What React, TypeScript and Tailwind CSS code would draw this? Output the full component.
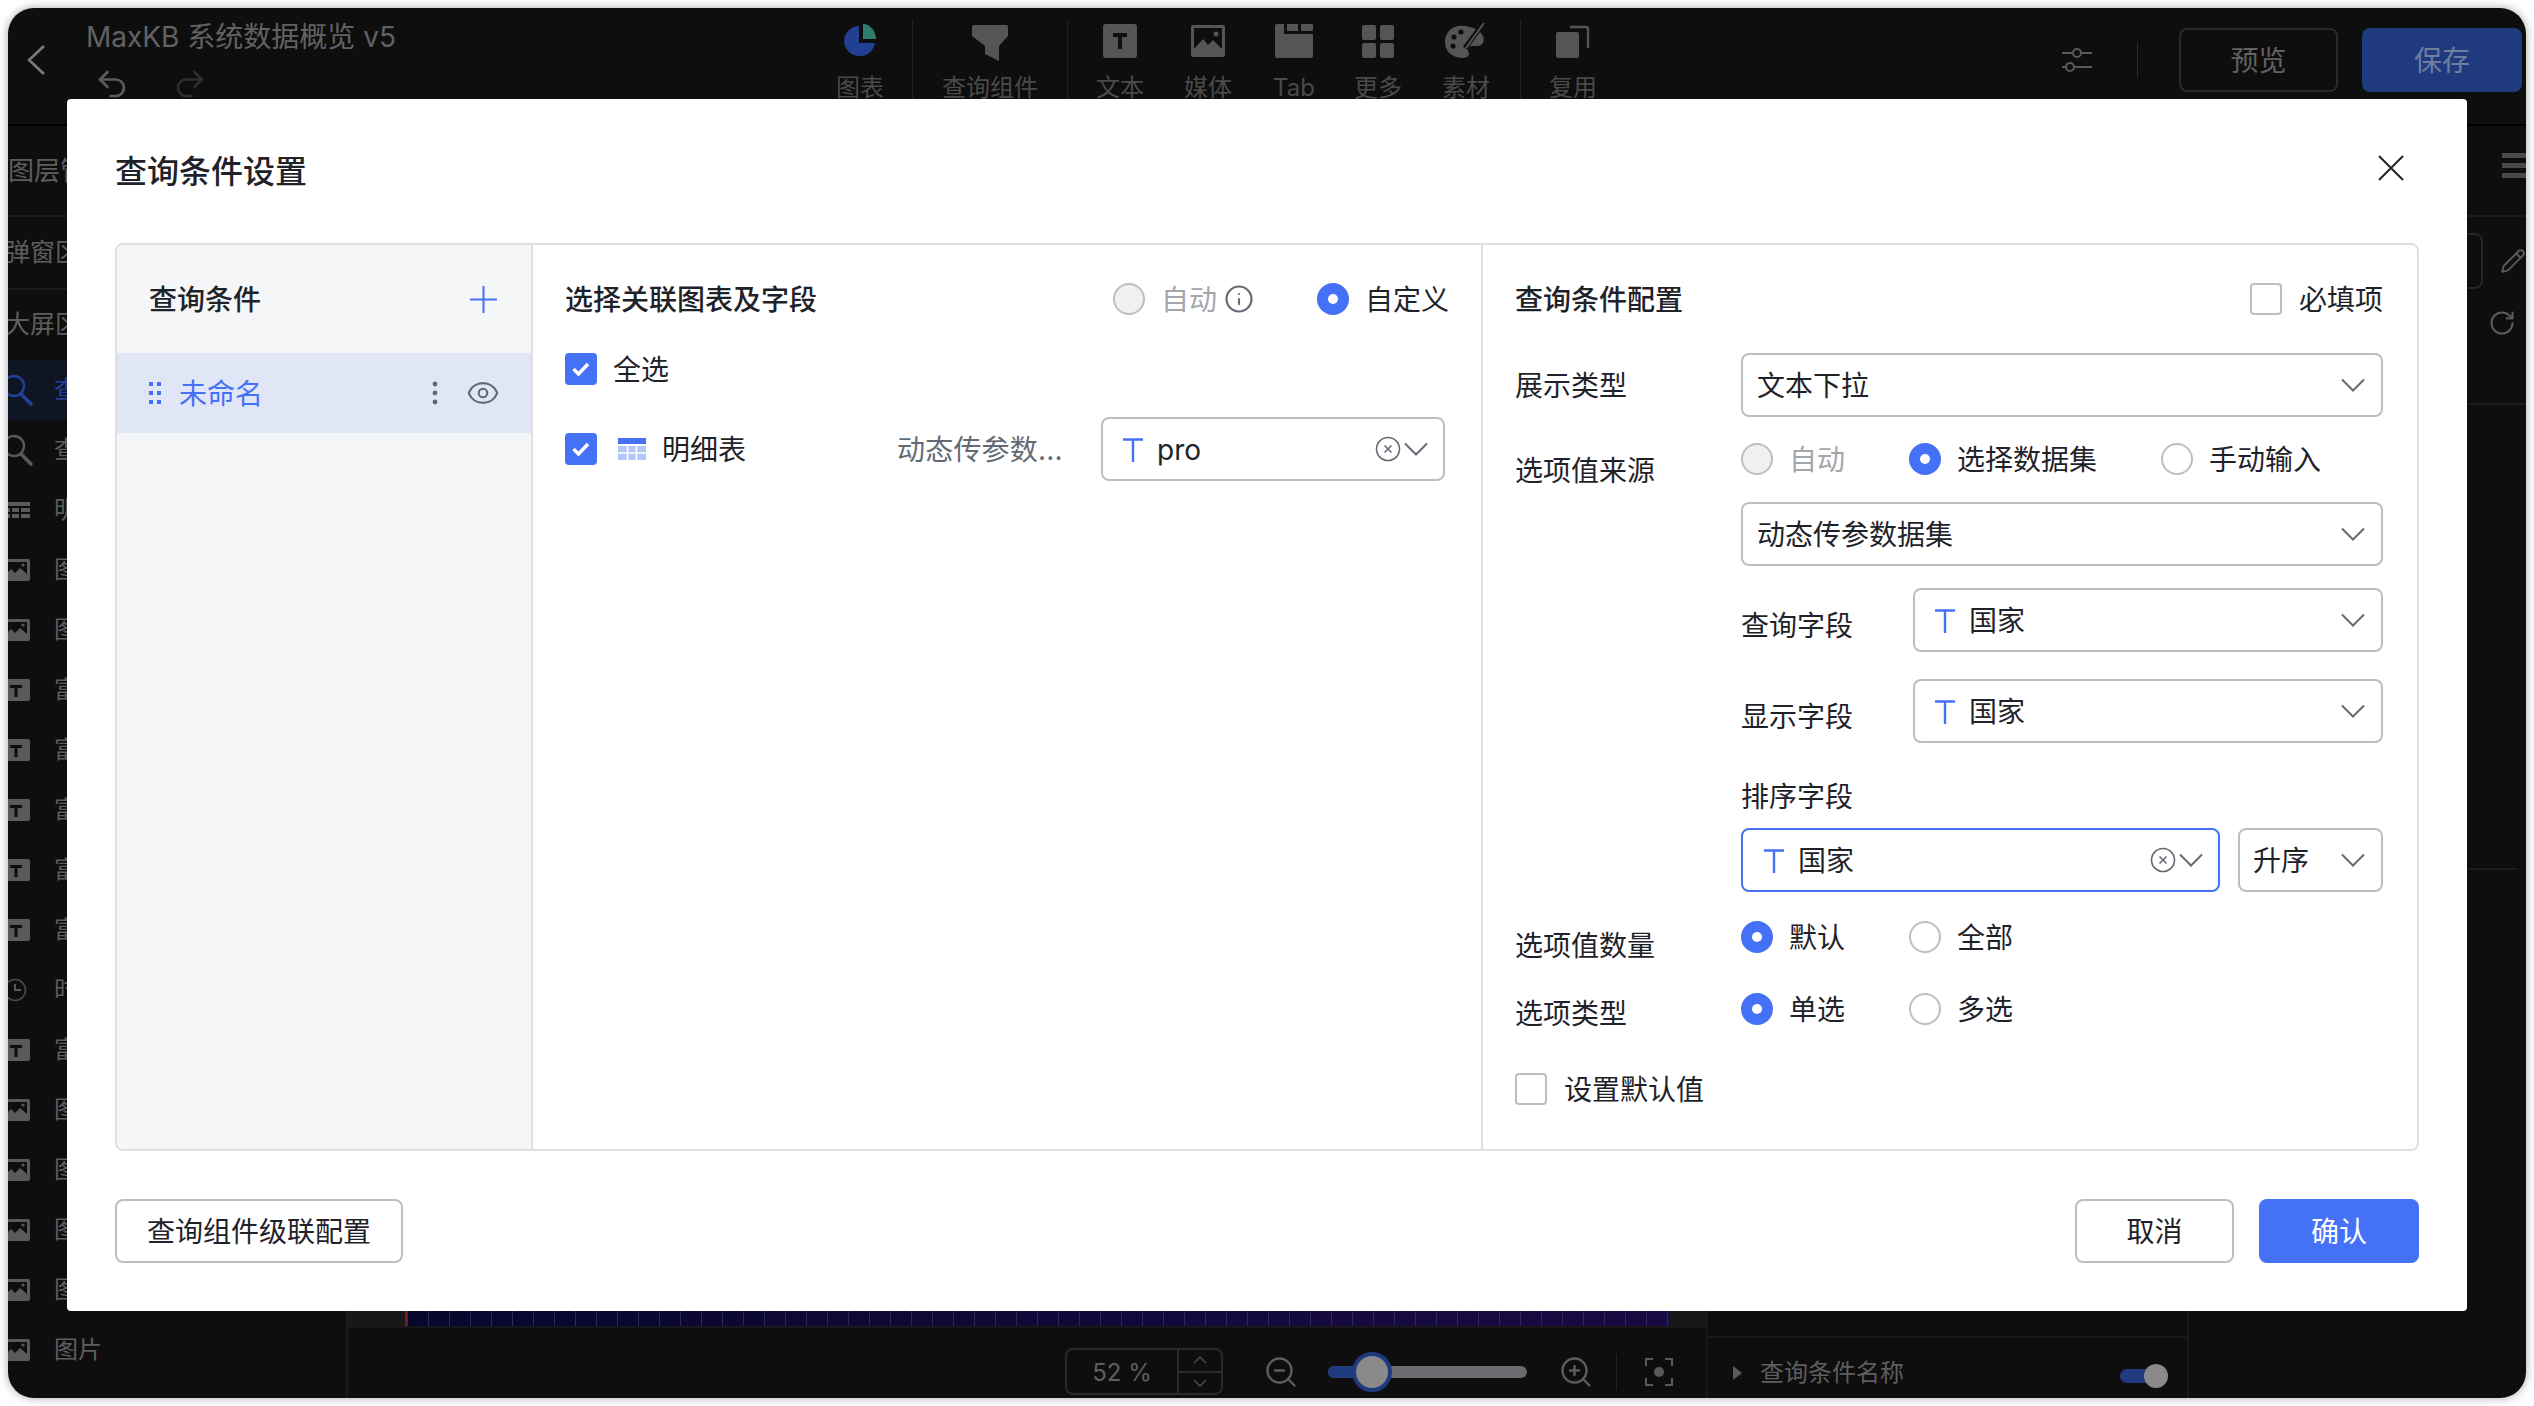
import React from "react";
import { Eye, Info, Redo2, RotateCw, Undo2, ZoomIn, ZoomOut, Pencil } from "lucide-react";

const Chevron = () => (
  <svg width="24" height="14" viewBox="0 0 24 14" fill="none" className="shrink-0">
    <path d="M1 1.5 L12 12.5 L23 1.5" stroke="#646a73" strokeWidth="2" />
  </svg>
);

const ClearIcon = () => (
  <svg width="26" height="26" viewBox="0 0 26 26" fill="none" className="shrink-0">
    <circle cx="13" cy="13" r="11.5" stroke="#646a73" strokeWidth="1.6" />
    <path d="M9.5 9.5 L16.5 16.5 M16.5 9.5 L9.5 16.5" stroke="#646a73" strokeWidth="1.6" />
  </svg>
);

const TIcon = () => (
  <svg width="20" height="24" viewBox="0 0 20 24" className="shrink-0">
    <path d="M0 1.5 H20 M10 1.5 V24" stroke="#4571f6" strokeWidth="2.4" fill="none" />
  </svg>
);

const Radio = ({ state }: { state: "on" | "off" | "disabled" }) =>
  state === "on" ? (
    <span className="w-8 h-8 rounded-full bg-[#4571f6] flex items-center justify-center shrink-0">
      <span className="w-[10px] h-[10px] rounded-full bg-white" />
    </span>
  ) : (
    <span
      className={
        state === "disabled"
          ? "w-8 h-8 rounded-full border-2 border-[#bbbfc4] bg-[#eff0f1] shrink-0"
          : "w-8 h-8 rounded-full border-2 border-[#bbbfc4] bg-white shrink-0"
      }
    />
  );

const Check = ({ on }: { on?: boolean }) =>
  on ? (
    <span className="w-8 h-8 rounded-[4px] bg-[#4571f6] flex items-center justify-center shrink-0">
      <svg width="20" height="16" viewBox="0 0 20 16" fill="none">
        <path d="M2.5 8 L7.5 13 L17 3" stroke="white" strokeWidth="3.4" />
      </svg>
    </span>
  ) : (
    <span className="w-8 h-8 rounded-[4px] border-2 border-[#bbbfc4] bg-white shrink-0" />
  );

const RadioItem = ({ state, label }: { state: "on" | "off" | "disabled"; label: string }) => (
  <div className="flex items-center gap-[16px] h-8">
    <Radio state={state} />
    <span className={state === "disabled" ? "text-[28px] leading-8 pt-[2px] text-[#a3a6ab]" : "text-[28px] leading-8 pt-[2px] text-[#1f2329]"}>
      {label}
    </span>
  </div>
);

const Select = ({
  className,
  children,
  clear,
}: {
  className: string;
  children: React.ReactNode;
  clear?: boolean;
}) => (
  <div className={"h-16 rounded-lg border-2 bg-white flex items-center text-[28px] text-[#1f2329] shrink-0 " + className}>
    <div className="flex-1 flex items-center min-w-0 pt-[2px]">{children}</div>
    {clear && <ClearIcon />}
    <span className={clear ? "ml-[3px] mr-[15px]" : "mr-[16px]"}>
      <Chevron />
    </span>
  </div>
);

const Field = ({ text }: { text: string }) => (
  <>
    <TIcon />
    <span className="ml-[14px]">{text}</span>
  </>
);

const ImageGlyph = () => (
  <svg width="30" height="22" viewBox="0 0 30 22" className="-ml-2 shrink-0">
    <rect width="30" height="22" rx="2" fill="#5a5a5a" />
    <path d="M3 18 L11 10 L15 14 L20 9 L27 15 V3 H3 Z" fill="#0e0e0e" />
    <circle cx="23" cy="6" r="1.6" fill="#5a5a5a" />
  </svg>
);
const TextGlyph = () => (
  <svg width="30" height="22" viewBox="0 0 30 22" className="-ml-2 shrink-0">
    <rect width="30" height="22" rx="2" fill="#5a5a5a" />
    <path d="M10 6 H22 V9 H17.5 V18 H14.5 V9 H10 Z" fill="#0e0e0e" />
  </svg>
);
const TableGlyph = () => (
  <svg width="30" height="16" viewBox="0 0 30 16" className="-ml-2 shrink-0">
    <path d="M0 0 H30 V4 H0 Z M0 6 H10 V10 H0 Z M12 6 H19 V10 H12 Z M21 6 H30 V10 H21 Z M0 12 H10 V16 H0 Z M12 12 H19 V16 H12 Z M21 12 H30 V16 H21 Z" fill="#5a5a5a" />
  </svg>
);
const ClockGlyph = () => (
  <svg width="30" height="24" viewBox="0 0 30 24" fill="none" className="-ml-2 shrink-0">
    <circle cx="15" cy="12" r="10.5" stroke="#4a4a4a" strokeWidth="1.6" />
    <path d="M15 6 V12 H21" stroke="#5a5a5a" strokeWidth="2" />
  </svg>
);
const SearchGlyph = ({ color }: { color: string }) => (
  <svg width="36" height="34" viewBox="0 0 36 34" fill="none" className="-ml-2 shrink-0">
    <circle cx="14" cy="13" r="10" stroke={color} strokeWidth="2.4" />
    <path d="M21 21 L31 31" stroke={color} strokeWidth="3.6" strokeLinecap="round" />
  </svg>
);

const layerRows: { kind: string; text: string; active?: boolean }[] = [
  { kind: "search", text: "查询组件", active: true },
  { kind: "search", text: "查询组件" },
  { kind: "table", text: "明细表" },
  { kind: "image", text: "图片" },
  { kind: "image", text: "图片" },
  { kind: "text", text: "富文本" },
  { kind: "text", text: "富文本" },
  { kind: "text", text: "富文本" },
  { kind: "text", text: "富文本" },
  { kind: "text", text: "富文本" },
  { kind: "clock", text: "时间" },
  { kind: "text", text: "富文本" },
  { kind: "image", text: "图片" },
  { kind: "image", text: "图片" },
  { kind: "image", text: "图片" },
  { kind: "image", text: "图片" },
  { kind: "image", text: "图片" },
];

const rowIcon = (kind: string, active?: boolean) => {
  if (kind === "search") return <SearchGlyph color={active ? "#23409a" : "#5a5a5a"} />;
  if (kind === "table") return <TableGlyph />;
  if (kind === "image") return <ImageGlyph />;
  if (kind === "text") return <TextGlyph />;
  return <ClockGlyph />;
};

const Tool = ({ width, label, children }: { width: string; label: string; children: React.ReactNode }) => (
  <div className={"flex flex-col items-center shrink-0 " + width}>
    <div className="h-[38px] mt-[14px] flex items-center justify-center">{children}</div>
    <span className="mt-[16px] text-[24px] leading-[24px] text-[#4a4a4a]">{label}</span>
  </div>
);

const Sep = () => <div className="w-[1px] h-[80px] mt-3 bg-[#222222] shrink-0" />;

export default function App() {
  return (
    <div className="w-[2534px] h-[1406px] bg-white p-2 overflow-hidden font-['Inter','Noto_Sans_CJK_SC',sans-serif]">
      <div className="relative w-[2518px] h-[1390px] rounded-[26px] overflow-hidden bg-[#0e0e0e] flex flex-col shadow-[0_0_10px_rgba(0,0,0,0.35)]">
        {/* top bar */}
        <header className="h-[118px] border-b-2 border-black flex items-start shrink-0">
          <div className="w-[78px] shrink-0 pl-[18px] pt-[36px]">
            <svg width="20" height="32" viewBox="0 0 20 32" fill="none">
              <path d="M18 2 L3 16 L18 30" stroke="#7a7a7a" strokeWidth="2.6" />
            </svg>
          </div>
          <div className="w-[722px] shrink-0 pt-[11px]">
            <div className="text-[28px] leading-[36px] text-[#626262]">MaxKB 系统数据概览 v5</div>
            <div className="flex items-center gap-[42px] mt-[11px] ml-[8px]">
              <Undo2 size={36} strokeWidth={1.8} color="#5c5c5c" />
              <Redo2 size={36} strokeWidth={1.8} color="#2e2e2e" />
            </div>
          </div>
          <Tool width="w-[104px]" label="图表">
            <svg width="32" height="34" viewBox="0 0 32 34">
              <path d="M15 2 V19 H31 A15.5 15 0 1 1 15 2 Z" fill="#213f93" />
              <path d="M19 0 A13 16 0 0 1 32 15 H19 Z" fill="#2f7d6f" />
            </svg>
          </Tool>
          <Sep />
          <Tool width="w-[154px]" label="查询组件">
            <svg width="36" height="36" viewBox="0 0 36 36" className="mt-[4px]">
              <path d="M2 0 H34 Q36 0 36 2 V11 L27 21 V36 L13 29 V21 L0 11 V2 Q0 0 2 0 Z" fill="#555555" />
            </svg>
          </Tool>
          <Sep />
          <Tool width="w-[104px]" label="文本">
            <svg width="34" height="34" viewBox="0 0 34 34">
              <rect width="34" height="34" rx="3" fill="#555555" />
              <path d="M10 9 H24 V13 H19 V25 H15 V13 H10 Z" fill="#0e0e0e" />
            </svg>
          </Tool>
          <Tool width="w-[72px]" label="媒体">
            <svg width="34" height="32" viewBox="0 0 34 32">
              <rect width="34" height="32" rx="2" fill="#555555" />
              <path d="M3 24 L12 14 L17 20 L22 15 L31 24 V3 H3 Z" fill="#0e0e0e" />
              <circle cx="25" cy="9" r="2.5" fill="#555555" />
            </svg>
          </Tool>
          <Tool width="w-[100px]" label="Tab">
            <svg width="38" height="34" viewBox="0 0 38 34">
              <path d="M0 2 Q0 0 2 0 H9 V10 H38 V32 Q38 34 36 34 H2 Q0 34 0 32 Z" fill="#555555" />
              <rect x="12" y="0" width="11" height="7" fill="#555555" />
              <rect x="26" y="0" width="12" height="7" rx="1" fill="#555555" />
            </svg>
          </Tool>
          <Tool width="w-[68px]" label="更多">
            <svg width="32" height="33" viewBox="0 0 32 33" fill="#555555">
              <rect width="14" height="15" rx="2" />
              <rect x="18" width="14" height="15" rx="2" />
              <rect y="18" width="14" height="15" rx="2" />
              <rect x="18" y="18" width="14" height="15" rx="2" />
            </svg>
          </Tool>
          <Tool width="w-[108px]" label="素材">
            <svg width="42" height="38" viewBox="0 0 42 38">
              <path d="M20 4 C8 2 0 10 0 20 C0 30 8 36 18 36 C24 36 25 32 23 29 C22 26 24 24 27 24 H32 C38 24 40 19 38 14 C35 8 28 5 20 4 Z" fill="#555555" />
              <circle cx="9" cy="15" r="2.6" fill="#0e0e0e" />
              <circle cx="16" cy="10" r="2.6" fill="#0e0e0e" />
              <circle cx="8" cy="24" r="2.6" fill="#0e0e0e" />
              <path d="M20 26 L38 2" stroke="#0e0e0e" strokeWidth="5" />
              <path d="M21 26 L39 1" stroke="#555555" strokeWidth="2" />
            </svg>
          </Tool>
          <Sep />
          <Tool width="w-[104px]" label="复用">
            <svg width="34" height="34" viewBox="0 0 34 34" fill="none">
              <rect x="0" y="8" width="23" height="26" rx="2" fill="#555555" />
              <path d="M14 3 H30 Q32 3 32 5 V24" stroke="#555555" strokeWidth="2.4" />
            </svg>
          </Tool>
          <div className="ml-[437px] w-[46px] h-[40px] mt-[32px] shrink-0">
            <svg width="30" height="30" viewBox="0 0 30 30" fill="none" className="mt-[5px]">
              <path d="M0 8 H10 M19 8 H30 M0 22 H4 M13 22 H30" stroke="#5a5a5a" strokeWidth="2" />
              <circle cx="15" cy="8" r="4" stroke="#5a5a5a" strokeWidth="2" />
              <circle cx="8" cy="22" r="4" stroke="#5a5a5a" strokeWidth="2" />
            </svg>
          </div>
          <div className="w-[1px] h-[36px] mt-[34px] bg-[#2a2a2a] shrink-0 ml-[29px]" />
          <div className="ml-[41px] mt-5 w-[159px] h-[64px] rounded-lg border-2 border-[#2a2a2a] flex items-center justify-center text-[28px] pt-[2px] text-[#626262] shrink-0">
            预览
          </div>
          <div className="ml-[24px] mt-5 w-[160px] h-[64px] rounded-lg bg-[#203a80] flex items-center justify-center text-[28px] pt-[2px] text-[#6f7d9f] shrink-0">
            保存
          </div>
        </header>

        <div className="flex flex-1 min-h-0">
          {/* layer sidebar */}
          <aside className="w-[340px] border-r-2 border-[#1b1b1b] shrink-0 text-[24px] text-[#5e5e5e]">
            <div className="h-[91px] border-b-2 border-[#1c1c1c] flex items-center text-[26px]">图层管理</div>
            <div className="h-[73px] border-b-2 border-[#1c1c1c] flex items-center text-[25px]">
              <span className="-ml-[3px]">弹窗区</span>
            </div>
            <div className="h-[70px] flex items-center text-[25px]">
              <span className="-ml-[3px]">大屏区</span>
            </div>
            {layerRows.map((r, i) => (
              <div key={i} className={r.active ? "h-[60px] flex items-center bg-[#0f1522]" : "h-[60px] flex items-center"}>
                <span className="w-[46px] shrink-0 flex items-center">{rowIcon(r.kind, r.active)}</span>
                <span className={r.active ? "text-[#23409a]" : ""}>{r.text}</span>
              </div>
            ))}
          </aside>

          {/* canvas */}
          <div className="w-[1358px] shrink-0 flex flex-col">
            <div className="flex-1 bg-[#181818] pl-[57px] pr-[36px] flex min-h-0">
              <div className="flex-1 border-l-2 border-[#7a1f1f] bg-[repeating-linear-gradient(90deg,#2a2a55_0,#2a2a55_1px,transparent_1px,transparent_21px),linear-gradient(90deg,#07072e,#1a0a42)]" />
            </div>
            <div className="h-[72px] border-t-2 border-[#181818] shrink-0 pt-[20px] flex items-start pl-[717px]">
              <div className="w-[158px] h-[47px] rounded-lg border-2 border-[#2a2a2a] flex shrink-0">
                <div className="w-[110px] flex items-center justify-center text-[24px] pt-[2px] text-[#5e5e5e]">52 %</div>
                <div className="flex-1 border-l-2 border-[#2a2a2a] flex flex-col">
                  <div className="flex-1 border-b-2 border-[#2a2a2a] flex items-center justify-center">
                    <svg width="14" height="8" viewBox="0 0 14 8" fill="none"><path d="M1 7 L7 1 L13 7" stroke="#4a4a4a" strokeWidth="1.5" /></svg>
                  </div>
                  <div className="flex-1 flex items-center justify-center">
                    <svg width="14" height="8" viewBox="0 0 14 8" fill="none"><path d="M1 1 L7 7 L13 1" stroke="#4a4a4a" strokeWidth="1.5" /></svg>
                  </div>
                </div>
              </div>
              <div className="h-[47px] flex items-center ml-[40px]">
                <ZoomOut size={36} strokeWidth={1.6} color="#5e5e5e" />
              </div>
              <div className="h-[47px] flex items-center ml-[29px]">
                <div className="relative w-[199px] h-3 rounded-full bg-[#6a6b6f]">
                  <div className="w-[44px] h-3 rounded-l-full bg-[#203a80]" />
                  <div className="absolute left-[24px] -top-[14px] w-[40px] h-[40px] rounded-full bg-[#8a8a8a] border-[4px] border-[#203a80]" />
                </div>
              </div>
              <div className="h-[47px] flex items-center ml-[31px]">
                <ZoomIn size={36} strokeWidth={1.6} color="#5e5e5e" />
              </div>
              <div className="w-[1px] h-[36px] mt-[6px] bg-[#222222] ml-[22px]" />
              <div className="h-[47px] flex items-center ml-[28px]">
                <svg width="28" height="28" viewBox="0 0 28 28" fill="none">
                  <path d="M1 8 V1 H8 M20 1 H27 V8 M27 20 V27 H20 M8 27 H1 V20" stroke="#5a5a5a" strokeWidth="2" />
                  <circle cx="14" cy="14" r="5" fill="#5a5a5a" />
                </svg>
              </div>
            </div>
          </div>

          {/* config panel */}
          <div className="w-[483px] border-x-2 border-[#181818] shrink-0 flex flex-col justify-end">
            <div className="h-[62px] border-t-2 border-[#181818] flex items-center pl-[25px] pt-[10px] text-[24px] text-[#5e5e5e]">
              <svg width="10" height="14" viewBox="0 0 10 14" className="shrink-0"><path d="M0 0 L9 7 L0 14 Z" fill="#5a5a5a" /></svg>
              <span className="ml-[17px]">查询条件名称</span>
              <div className="relative ml-[216px] mt-[6px] w-[48px] h-[14px] rounded-full bg-[#203a80]">
                <div className="absolute right-0 -top-[5px] w-[24px] h-[24px] rounded-full bg-[#8a8a8a]" />
              </div>
            </div>
          </div>

          {/* far right panel */}
          <div className="flex-1 flex flex-col items-end">
            <div className="h-[91px] w-full border-b-2 border-[#1c1c1c] flex justify-end pt-[27px]">
              <svg width="24" height="26" viewBox="0 0 24 26" fill="#4a4a4a">
                <rect width="24" height="5" />
                <rect y="10" width="24" height="5" />
                <rect y="20" width="24" height="5" />
              </svg>
            </div>
            <div className="w-full flex justify-end items-start mt-[16px] h-[172px] border-b-2 border-[#1c1c1c]">
              <div className="flex-1 flex flex-col items-end">
                <div className="w-full flex justify-end items-center">
                  <div className="w-[60px] h-[56px] rounded-r-lg border-2 border-l-0 border-[#262626]" />
                  <div className="w-[43px] flex justify-end">
                    <Pencil size={26} strokeWidth={1.8} color="#5a5a5a" />
                  </div>
                </div>
                <div className="w-full flex justify-end pr-[10px] mt-[20px]">
                  <RotateCw size={28} strokeWidth={1.8} color="#5a5a5a" />
                </div>
              </div>
            </div>
            <div className="w-[329px] h-[465px] border-b-2 border-[#1c1c1c] mr-[8px]" />
          </div>
        </div>

        {/* modal */}
        <div className="absolute left-[59px] top-[91px] w-[2400px] h-[1212px] bg-white rounded-[4px] flex flex-col pl-[48px] text-[28px] text-[#1f2329]">
          <div className="h-[144px] shrink-0 flex items-start pt-[52px] pr-[63px] justify-between">
            <span className="text-[32px] leading-10 font-medium pt-[1px]">查询条件设置</span>
            <svg width="26" height="26" viewBox="0 0 26 26" fill="none" className="mt-[4px]">
              <path d="M1 1 L25 25 M25 1 L1 25" stroke="#1f2329" strokeWidth="2" />
            </svg>
          </div>

          <div className="w-[2304px] h-[908px] shrink-0 border-2 border-[#dee0e3] rounded-lg flex overflow-hidden">
            {/* left */}
            <div className="w-[416px] shrink-0 bg-[#f5f6f7] border-r-2 border-[#dee0e3]">
              <div className="h-[108px] flex items-center justify-between pl-[32px] pr-[34px]">
                <span className="font-medium pt-[2px]">查询条件</span>
                <svg width="27" height="27" viewBox="0 0 27 27" fill="none">
                  <path d="M0 13.5 H27 M13.5 0 V27" stroke="#4571f6" strokeWidth="2" />
                </svg>
              </div>
              <div className="h-[80px] bg-[#e0e6f5] flex items-center pl-[32px] pr-[31px]">
                <svg width="12" height="22" viewBox="0 0 12 22" fill="#4571f6" className="shrink-0">
                  <rect width="4" height="4" />
                  <rect x="8" width="4" height="4" />
                  <rect y="9" width="4" height="4" />
                  <rect x="8" y="9" width="4" height="4" />
                  <rect y="18" width="4" height="4" />
                  <rect x="8" y="18" width="4" height="4" />
                </svg>
                <span className="ml-[18px] pt-[2px] text-[#4571f6] flex-1">未命名</span>
                <svg width="6" height="24" viewBox="0 0 6 24" fill="#646a73" className="shrink-0">
                  <circle cx="3" cy="3" r="2.4" />
                  <circle cx="3" cy="12" r="2.4" />
                  <circle cx="3" cy="21" r="2.4" />
                </svg>
                <Eye size={34} strokeWidth={1.5} color="#646a73" className="ml-[28px]" />
              </div>
            </div>

            {/* middle */}
            <div className="w-[950px] shrink-0 border-r-2 border-[#dee0e3] pl-[32px] pr-[32px]">
              <div className="h-[108px] flex items-center">
                <span className="font-medium flex-1 pt-[2px]">选择关联图表及字段</span>
                <RadioItem state="disabled" label="自动" />
                <Info size={30} strokeWidth={1.7} color="#646a73" className="ml-[7px]" />
                <span className="ml-[63px]">
                  <RadioItem state="on" label="自定义" />
                </span>
              </div>
              <div className="h-8 flex items-center gap-[16px]">
                <Check on />
                <span className="pt-[2px]">全选</span>
              </div>
              <div className="mt-8 h-16 flex items-center">
                <Check on />
                <svg width="28" height="22" viewBox="0 0 28 22" className="ml-[21px] shrink-0">
                  <rect width="28" height="6" fill="#4571f6" />
                  <rect y="8" width="28" height="14" fill="#b5c6fb" />
                  <path d="M0 15 H28 M9.5 8 V22 M18.5 8 V22" stroke="white" strokeWidth="1.6" />
                </svg>
                <span className="ml-[16px] w-[235px] pt-[2px]">明细表</span>
                <span className="w-[204px] pt-[2px] text-[#646a73] tracking-[0.2px]">动态传参数...</span>
                <Select className="w-[344px] border-[#bbbfc4] pl-[20px]" clear>
                  <Field text="pro" />
                </Select>
              </div>
            </div>

            {/* right */}
            <div className="flex-1 pl-[32px] pr-[34px]">
              <div className="h-[108px] flex items-center">
                <span className="font-medium flex-1 pt-[2px]">查询条件配置</span>
                <Check />
                <span className="ml-[17px] pt-[2px]">必填项</span>
              </div>

              <div className="flex items-center">
                <span className="w-[226px] shrink-0 leading-10 pt-[2px]">展示类型</span>
                <Select className="flex-1 border-[#bbbfc4] pl-[14px]">文本下拉</Select>
              </div>

              <div className="flex mt-[26px]">
                <span className="w-[226px] shrink-0 leading-10 pt-[8px] box-content h-10">选项值来源</span>
                <div className="flex-1 min-w-0">
                  <div className="flex h-8">
                    <div className="w-[168px]"><RadioItem state="disabled" label="自动" /></div>
                    <div className="w-[252px]"><RadioItem state="on" label="选择数据集" /></div>
                    <RadioItem state="off" label="手动输入" />
                  </div>
                  <Select className="w-full mt-[27px] border-[#bbbfc4] pl-[14px]">动态传参数据集</Select>
                  <div className="flex mt-[22px]">
                    <span className="w-[172px] shrink-0 leading-10 pt-[18px] box-content h-10">查询字段</span>
                    <Select className="flex-1 border-[#bbbfc4] pl-[20px]">
                      <Field text="国家" />
                    </Select>
                  </div>
                  <div className="flex mt-[27px]">
                    <span className="w-[172px] shrink-0 leading-10 pt-[18px] box-content h-10">显示字段</span>
                    <Select className="flex-1 border-[#bbbfc4] pl-[20px]">
                      <Field text="国家" />
                    </Select>
                  </div>
                  <div className="leading-10 mt-[34px] h-10">排序字段</div>
                  <div className="flex gap-[18px] mt-[11px]">
                    <Select className="flex-1 border-[#4571f6] pl-[21px]" clear>
                      <Field text="国家" />
                    </Select>
                    <Select className="w-[145px] border-[#bbbfc4] pl-[13px]">升序</Select>
                  </div>
                </div>
              </div>

              <div className="flex mt-[29px] h-[44px]">
                <span className="w-[226px] shrink-0 leading-10 pt-[5px]">选项值数量</span>
                <div className="w-[168px]"><RadioItem state="on" label="默认" /></div>
                <RadioItem state="off" label="全部" />
              </div>
              <div className="flex mt-[28px] h-10">
                <span className="w-[226px] shrink-0 leading-10 pt-[1px]">选项类型</span>
                <div className="w-[168px]"><RadioItem state="on" label="单选" /></div>
                <RadioItem state="off" label="多选" />
              </div>
              <div className="flex items-center gap-[17px] mt-[40px] h-8">
                <Check />
                <span className="pt-[2px]">设置默认值</span>
              </div>
            </div>
          </div>

          <div className="w-[2304px] flex items-center mt-[48px]">
            <div className="h-16 w-[288px] rounded-lg border-2 border-[#bbbfc4] flex items-center justify-center pt-[2px]">查询组件级联配置</div>
            <div className="ml-auto h-16 w-[159px] rounded-lg border-2 border-[#bbbfc4] flex items-center justify-center pt-[2px]">取消</div>
            <div className="ml-[25px] h-16 w-[160px] rounded-lg bg-[#4571f6] text-white flex items-center justify-center pt-[2px]">确认</div>
          </div>
        </div>
      </div>
    </div>
  );
}
